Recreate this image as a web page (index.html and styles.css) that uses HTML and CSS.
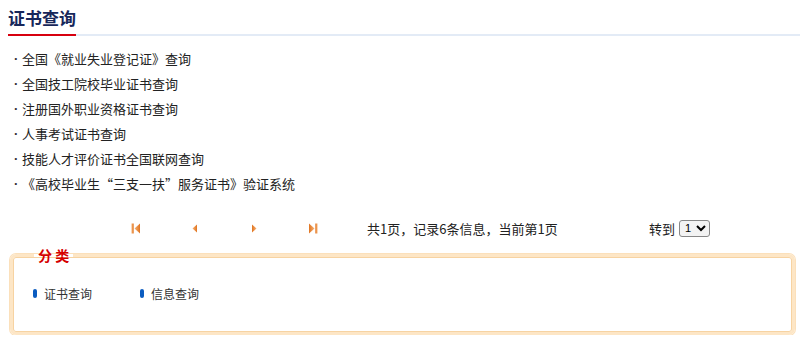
FILE: index.html
```html
<!DOCTYPE html>
<html lang="zh-CN">
<head>
<meta charset="utf-8">
<title>证书查询</title>
<link rel="stylesheet" href="styles.css">
</head>
<body>
<div class="head">
  <h2 class="title">证书查询</h2>
</div>
<ul class="list">
  <li><span class="dot">·</span>全国《就业失业登记证》查询</li>
  <li><span class="dot">·</span>全国技工院校毕业证书查询</li>
  <li><span class="dot">·</span>注册国外职业资格证书查询</li>
  <li><span class="dot">·</span>人事考试证书查询</li>
  <li><span class="dot">·</span>技能人才评价证书全国联网查询</li>
  <li><span class="dot">·</span>《高校毕业生“三支一扶”服务证书》验证系统</li>
</ul>
<div class="pager">
  <span class="pg-cell"><svg class="pg-icon" width="10" height="11" viewBox="0 0 10 11"><defs><linearGradient id="g1" x1="0" y1="0" x2="1" y2="0"><stop offset="0" stop-color="#f6b072"/><stop offset="1" stop-color="#e07420"/></linearGradient></defs><rect x="0.5" y="0.5" width="2.2" height="10" fill="url(#g1)"/><polygon points="9,0.5 9,10.5 3.5,5.5" fill="url(#g1)"/></svg></span>
  <span class="pg-cell"><svg class="pg-icon" width="10" height="11" viewBox="0 0 10 11"><defs><linearGradient id="g2" x1="0" y1="0" x2="1" y2="0"><stop offset="0" stop-color="#f6b072"/><stop offset="1" stop-color="#e07420"/></linearGradient></defs><polygon points="7,1.5 7,9.5 2.5,5.5" fill="url(#g2)"/></svg></span>
  <span class="pg-cell"><svg class="pg-icon" width="10" height="11" viewBox="0 0 10 11"><defs><linearGradient id="g3" x1="0" y1="0" x2="1" y2="0"><stop offset="0" stop-color="#e07420"/><stop offset="1" stop-color="#f6b072"/></linearGradient></defs><polygon points="3,1.5 3,9.5 7.5,5.5" fill="url(#g3)"/></svg></span>
  <span class="pg-cell"><svg class="pg-icon" width="10" height="11" viewBox="0 0 10 11"><defs><linearGradient id="g4" x1="0" y1="0" x2="1" y2="0"><stop offset="0" stop-color="#e07420"/><stop offset="1" stop-color="#f6b072"/></linearGradient></defs><polygon points="1,0.5 1,10.5 6.5,5.5" fill="url(#g4)"/><rect x="7.3" y="0.5" width="2.2" height="10" fill="url(#g4)"/></svg></span>
  <span class="pg-info">共1页，记录6条信息，当前第1页</span>
  <span class="pg-jump">转到 <select class="pg-select"><option>1</option></select></span>
</div>
<fieldset class="cat">
  <legend class="cat-title">分 类</legend>
  <div class="cat-items">
    <span class="cat-item"><i class="mark"></i>证书查询</span>
    <span class="cat-item"><i class="mark"></i>信息查询</span>
  </div>
</fieldset>
</body>
</html>
```
FILE: styles.css
```css
* { box-sizing: border-box; }
body {
  margin: 0;
  width: 800px;
  font-family: "Noto Sans CJK SC", "Noto Sans", sans-serif;
  color: #222;
  background: #fff;
}
.head {
  margin-left: 8px;
  border-bottom: 2px solid #e3ebf6;
  display: flex;
}
.title {
  margin: 0 0 -2px 0;
  padding: 4px 0 3px;
  font-size: 17px;
  line-height: 27px;
  font-weight: bold;
  color: #17275a;
  border-bottom: 2px solid #d7000f;
}
.list {
  list-style: none;
  margin: 10px 0 0 0;
  padding: 0 0 0 14px;
}
.list li {
  display: flex;
  align-items: center;
  height: 25px;
  font-size: 13px;
  color: #222;
}
.dot {
  font-family: "Liberation Sans", sans-serif;
  font-weight: bold;
  color: #333;
  width: 8px;
  line-height: 1;
}
.pager {
  display: flex;
  align-items: center;
  margin-top: 20px;
  padding-left: 131px;
  height: 24px;
  font-size: 13px;
}
.pg-cell {
  width: 59px;
  display: flex;
  align-items: center;
}
.pg-icon { display: block; }
.pg-info { width: 282px; }
.pg-jump {
  display: flex;
  align-items: center;
  gap: 4px;
}
.pg-select {
  font-size: 11px;
  height: 17px;
  padding: 0 1px;
  border: 1px solid #888;
  border-radius: 3px;
  background: #f3f3f3;
}
.cat {
  margin: 8px 5px 0 10px;
  padding: 23px 20px 0 20px;
  height: 87px;
  border: 3px solid #fde6c6;
  border-radius: 6px;
  box-shadow: inset 0 0 0 1px #f7d3a2, 0 0 0 1px #fbe0bb;
}
.cat-title {
  margin-left: 1px;
  padding: 0 4px;
  font-size: 14px;
  font-weight: bold;
  color: #d50000;
  line-height: 14px;
}
.cat-items {
  display: flex;
  font-size: 12px;
  color: #333;
}
.cat-item {
  display: flex;
  align-items: center;
  width: 107px;
}
.mark {
  display: inline-block;
  width: 4px;
  height: 9px;
  border-radius: 2px;
  background: #0b5cc0;
  margin-right: 7px;
}
```
